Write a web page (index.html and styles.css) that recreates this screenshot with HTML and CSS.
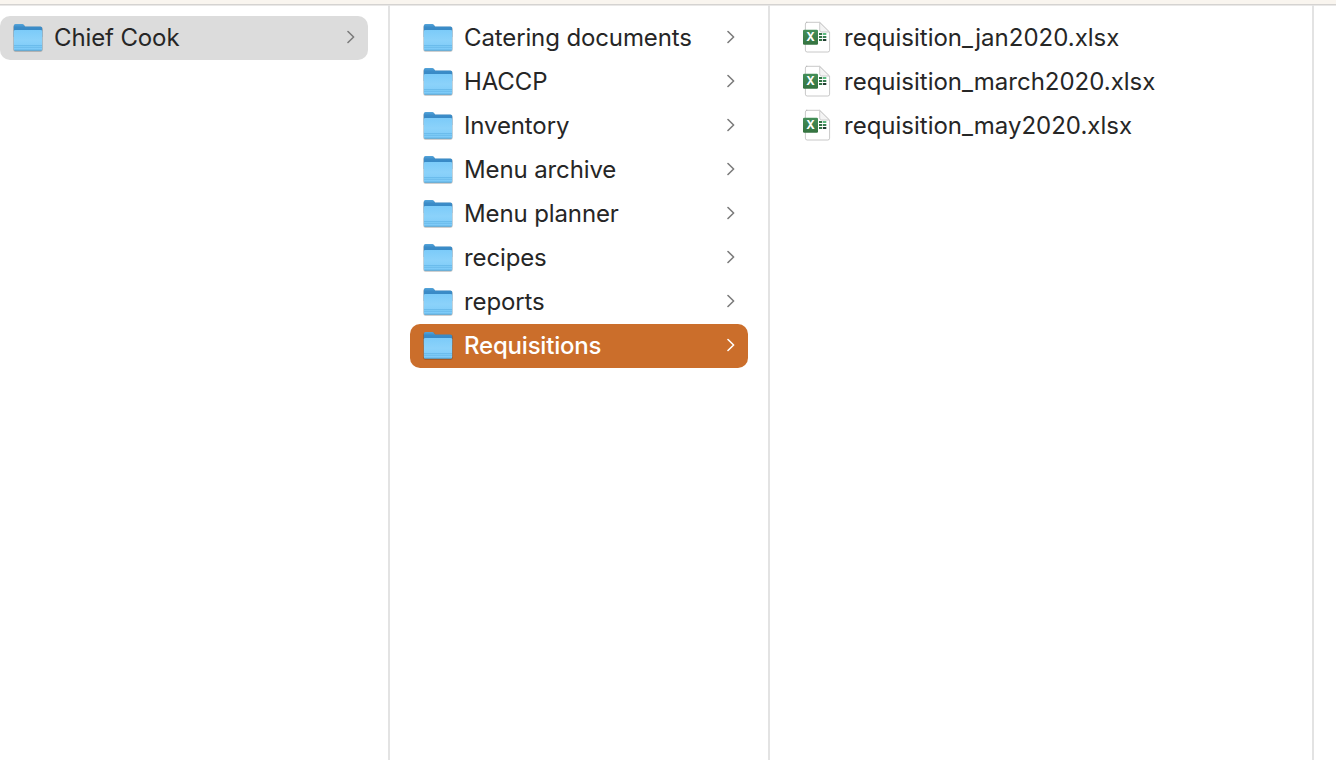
FILE: index.html
```html
<!DOCTYPE html>
<html lang="en">
<head>
    <meta charset="UTF-8">
    <meta name="viewport" content="width=device-width, initial-scale=1.0">
    <title>Requisitions</title>
    <link rel="stylesheet" href="styles.css">
</head>
<body>
    <!-- Shared icons -->
    <svg class="sprite" width="0" height="0">
        <defs>
            <linearGradient id="folderBack" x1="0" y1="0" x2="0" y2="1">
                <stop offset="0" stop-color="#55a5da"/>
                <stop offset="0.25" stop-color="#3b8cc8"/>
                <stop offset="1" stop-color="#3384bf"/>
            </linearGradient>
            <linearGradient id="folderFront" x1="0" y1="0" x2="0" y2="1">
                <stop offset="0" stop-color="#7ccbf9"/>
                <stop offset="0.5" stop-color="#8bd2fa"/>
                <stop offset="1" stop-color="#7bcaf8"/>
            </linearGradient>
            <linearGradient id="excelGreen" x1="0" y1="0" x2="0" y2="1">
                <stop offset="0" stop-color="#438f58"/>
                <stop offset="1" stop-color="#34723f"/>
            </linearGradient>
        </defs>
        <symbol id="folder" viewBox="0 0 32 32">
            <path d="M1.3 5Q1.3 2.4 3.5 2.4H10.5Q11.7 2.4 12.4 3.4L13.2 4.7H28.5Q30.7 4.7 30.7 7V27.4Q30.7 29.7 28.5 29.7H3.5Q1.3 29.7 1.3 27.4Z" fill="#000" opacity="0.25"/>
            <path d="M1.8 3.9Q1.8 2 3.6 2H10.2Q11.4 2 12.1 3.2L13.2 4.6H28.4Q30.2 4.6 30.2 6.4V15H1.8Z" fill="url(#folderBack)"/>
            <path d="M1.8 9.4Q1.8 8 3.3 8H28.7Q30.2 8 30.2 9.4V27Q30.2 28.6 28.7 28.6H3.3Q1.8 28.6 1.8 27Z" fill="url(#folderFront)"/>
            <path d="M2 23.5H30M2 25.3H30" stroke="#62b5e6" stroke-width="0.7" fill="none"/>
            <path d="M2.4 28.2H29.6" stroke="#50a2d2" stroke-width="0.9" fill="none"/>
        </symbol>
        <symbol id="sheet" viewBox="0 0 32 32">
            <path d="M6 1.3H19.7L29.6 11.2V29.2Q29.6 31 27.8 31H7.2Q5.4 31 5.4 29.2V3Q5.4 1.3 7.2 1.3Z" fill="#fff" stroke="#bababa" stroke-width="0.8"/>
            <path d="M19.7 1.5V9Q19.7 11 21.7 11H29.4Z" fill="#f4f4f4" stroke="#c2c2c2" stroke-width="0.8"/>
            <rect x="3" y="8.8" width="15" height="15" rx="1.2" fill="url(#excelGreen)"/>
            <path d="M19 12H22.2V14H19ZM19 15H22.2V17H19ZM19 18H22.2V20H19Z" fill="#347346"/>
            <path d="M23 12H26.3V14H23Z" fill="#5dbb80"/>
            <path d="M23 15H26.3V17H23Z" fill="#3a8054"/>
            <path d="M23 18H26.3V20H23Z" fill="#203d31"/>
        </symbol>
        <symbol id="chevron" viewBox="0 0 8 14">
            <path d="M1 1.5L6.6 7L1 12.5" fill="none" stroke="currentColor" stroke-width="1.6" stroke-linecap="round" stroke-linejoin="round"/>
        </symbol>
    </svg>

    <div class="window">
        <div class="toolbar-edge"></div>
        <div class="columns">
            <ul class="column column-root">
                <li class="row current"><svg class="icon"><use href="#folder"/></svg><span class="name">Chief Cook</span><svg class="chevron"><use href="#chevron"/></svg></li>
            </ul>
            <ul class="column column-folders">
                <li class="row"><svg class="icon"><use href="#folder"/></svg><span class="name">Catering documents</span><svg class="chevron"><use href="#chevron"/></svg></li>
                <li class="row"><svg class="icon"><use href="#folder"/></svg><span class="name">HACCP</span><svg class="chevron"><use href="#chevron"/></svg></li>
                <li class="row"><svg class="icon"><use href="#folder"/></svg><span class="name">Inventory</span><svg class="chevron"><use href="#chevron"/></svg></li>
                <li class="row"><svg class="icon"><use href="#folder"/></svg><span class="name">Menu archive</span><svg class="chevron"><use href="#chevron"/></svg></li>
                <li class="row"><svg class="icon"><use href="#folder"/></svg><span class="name">Menu planner</span><svg class="chevron"><use href="#chevron"/></svg></li>
                <li class="row"><svg class="icon"><use href="#folder"/></svg><span class="name">recipes</span><svg class="chevron"><use href="#chevron"/></svg></li>
                <li class="row"><svg class="icon"><use href="#folder"/></svg><span class="name">reports</span><svg class="chevron"><use href="#chevron"/></svg></li>
                <li class="row selected"><svg class="icon"><use href="#folder"/></svg><span class="name">Requisitions</span><svg class="chevron"><use href="#chevron"/></svg></li>
            </ul>
            <ul class="column column-files">
                <li class="row"><svg class="icon" viewBox="0 0 32 32"><use href="#sheet"/><text x="10.5" y="20" class="sheet-letter">X</text></svg><span class="name">requisition_jan2020.xlsx</span></li>
                <li class="row"><svg class="icon" viewBox="0 0 32 32"><use href="#sheet"/><text x="10.5" y="20" class="sheet-letter">X</text></svg><span class="name">requisition_march2020.xlsx</span></li>
                <li class="row"><svg class="icon" viewBox="0 0 32 32"><use href="#sheet"/><text x="10.5" y="20" class="sheet-letter">X</text></svg><span class="name">requisition_may2020.xlsx</span></li>
            </ul>
        </div>
    </div>
</body>
</html>
```
FILE: styles.css
```css
* {
    box-sizing: border-box;
}
body {
    margin: 0;
    background-color: #fff;
    color: #262626;
    font-family: Inter, "Liberation Sans", sans-serif;
    font-size: 24px;
    font-weight: 430;
}
.sprite {
    display: block;
}
.window {
    height: 100vh;
    display: flex;
    flex-direction: column;
    overflow: hidden;
}
.toolbar-edge {
    height: 5px;
    flex: none;
    background-color: #f9f5ef;
    border-bottom: 1px solid #d5d3d1;
    box-shadow: 0 1px 0 #e9e8e7;
}
.columns {
    flex: 1;
    display: flex;
}
.column {
    margin: 0;
    padding: 11px 20px 0;
    list-style: none;
    border-right: 2px solid #e3e3e3;
}
.column-root {
    width: 390px;
    padding-left: 0;
}
.column-folders {
    width: 380px;
}
.column-files {
    width: 544px;
}
.row {
    display: flex;
    align-items: center;
    height: 44px;
    padding: 0 12px;
    border-radius: 10px;
}
.row.current {
    background-color: #dcdcdc;
}
.row.selected {
    background-color: #cb6e2b;
    color: #fff;
    font-weight: 500;
}
.icon {
    flex: none;
    width: 32px;
    height: 32px;
    margin-right: 10px;
}
.column-files .icon {
    margin: 0 12px 2px -2px;
}
.name {
    flex: 1;
    line-height: 44px;
    white-space: nowrap;
    letter-spacing: -0.12px;
}
.column-files .name {
    letter-spacing: 0;
}
.selected .name {
    letter-spacing: -0.2px;
}
.chevron {
    flex: none;
    width: 8px;
    height: 14px;
    margin: 0 1px 2px 0;
    color: #7b7b7b;
}
.selected .chevron {
    color: #fff;
}
.sheet-letter {
    font-family: Inter, sans-serif;
    font-size: 11.5px;
    font-weight: 700;
    text-anchor: middle;
    fill: #fff;
}
```
